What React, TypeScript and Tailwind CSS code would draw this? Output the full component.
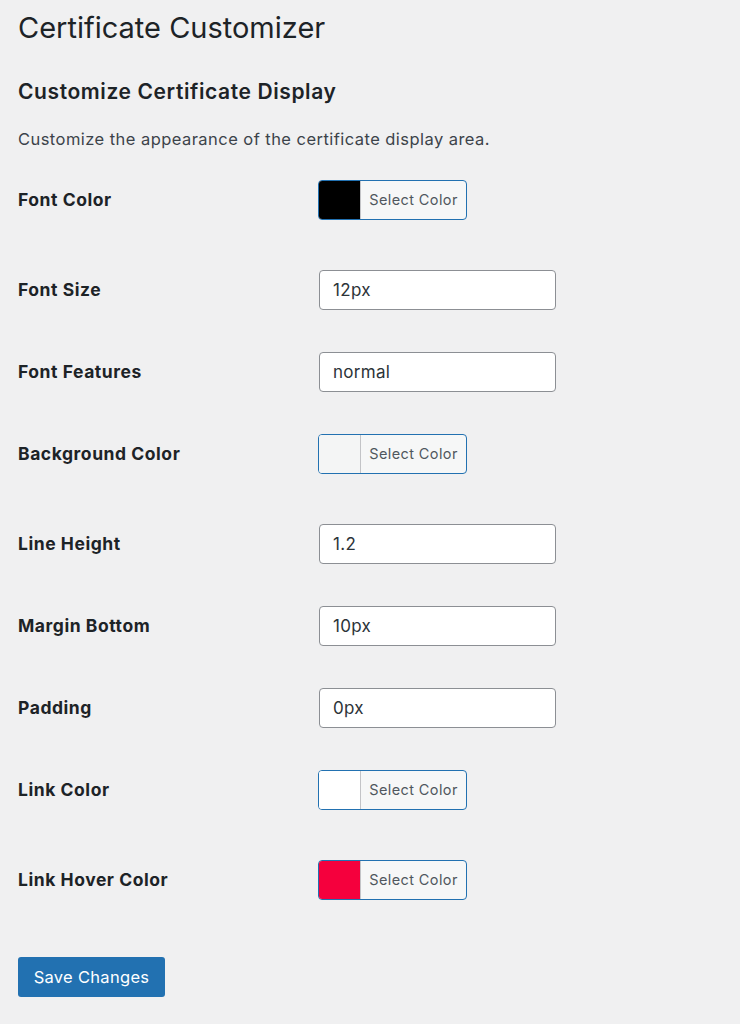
import React from 'react'

type Field =
  | { kind: 'color'; label: string; swatch: string }
  | { kind: 'text'; label: string; value: string }

const fields: Field[] = [
  { kind: 'color', label: 'Font Color', swatch: '#000000' },
  { kind: 'text', label: 'Font Size', value: '12px' },
  { kind: 'text', label: 'Font Features', value: 'normal' },
  { kind: 'color', label: 'Background Color', swatch: '#f4f5f5' },
  { kind: 'text', label: 'Line Height', value: '1.2' },
  { kind: 'text', label: 'Margin Bottom', value: '10px' },
  { kind: 'text', label: 'Padding', value: '0px' },
  { kind: 'color', label: 'Link Color', swatch: '#ffffff' },
  { kind: 'color', label: 'Link Hover Color', swatch: '#f5003d' },
]

function ColorButton({ swatch }: { swatch: string }) {
  return (
    <button
      type="button"
      className="flex h-[40px] w-[149px] overflow-hidden rounded-[4px] border border-[#2271b1] bg-[#f6f7f7]"
    >
      <span className="h-full w-[42px] border-r border-[#c3c4c7]" style={{ backgroundColor: swatch }} />
      <span className="flex h-full flex-1 items-center justify-center text-[14.5px] tracking-[0.4px] text-[#50575e]">
        Select Color
      </span>
    </button>
  )
}

export default function App() {
  return (
    <div className="min-h-screen bg-[#f0f0f1] px-[18px] pt-[10px] pb-10 font-['Inter',sans-serif] text-[#1d2327]">
      {/* Page title */}
      <h1 className="text-[29px] font-normal leading-[36px]">Certificate Customizer</h1>

      {/* Section */}
      <h2 className="mt-[32px] text-[21px] font-semibold leading-[28px] tracking-[0.6px]">
        Customize Certificate Display
      </h2>
      <p className="mt-[20px] text-[16.5px] leading-[26px] tracking-[0.45px] text-[#3c434a]">
        Customize the appearance of the certificate display area.
      </p>

      <div className="mt-[28px] flex flex-col">
        {fields.map((f) => (
          <div
            key={f.label}
            className={`flex h-[40px] items-center ${f.kind === 'color' ? 'mb-[50px]' : 'mb-[42px]'}`}
          >
            <label className="w-[300px] shrink-0 text-[17.5px] font-bold tracking-[0.55px]">{f.label}</label>
            {f.kind === 'color' ? (
              <ColorButton swatch={f.swatch} />
            ) : (
              <input
                type="text"
                defaultValue={f.value}
                className="ml-px h-[40px] w-[237px] rounded-[4px] border border-[#8c8f94] bg-white px-[13px] text-[17px] tracking-[0.3px] text-[#2c3338] outline-none"
              />
            )}
          </div>
        ))}
      </div>

      <button
        type="button"
        className="mt-[7px] h-[40px] w-[147px] rounded-[3px] bg-[#2271b1] text-[16.5px] tracking-[0.3px] text-white"
      >
        Save Changes
      </button>
    </div>
  )
}
